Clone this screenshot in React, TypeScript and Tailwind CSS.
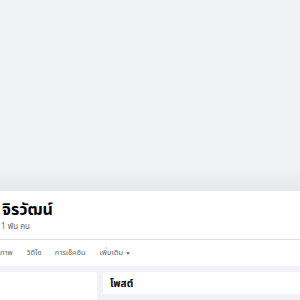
import React from "react";

export default function App() {
  const font = { fontFamily: '"Noto Sans", "Noto Sans Thai", "Liberation Sans", sans-serif' };
  return (
    <div className="w-[300px] h-[300px] overflow-hidden bg-[#f0f2f5]" style={font}>
      <div className="h-[191px] bg-[linear-gradient(to_bottom,#f0f2f5_0%,#f0f2f5_88%,#e6e7ea_100%)]" />
      <div className="h-[75px] bg-white flex flex-col">
        <div className="h-[49px] flex flex-col pl-[2px] pt-[8px] border-b border-[#dddfe2]">
          <div className="text-[16px] leading-[21px] font-bold text-[#050505]">จิรวัฒน์</div>
          <div className="text-[8px] leading-[12px] text-[#65676b] -ml-[1px]">1 พัน คน</div>
        </div>
        <div className="flex items-center h-[26px] text-[7.5px] text-[#65676b] font-normal">
          <span>ภาพ</span>
          <span className="ml-[14px]">วิดีโอ</span>
          <span className="ml-[13px]">การเช็คอิน</span>
          <span className="ml-[14px] flex items-center gap-[3px]">
            เพิ่มเติม
            <svg width="4" height="3" viewBox="0 0 10 6"><path d="M0 0 L10 0 L5 6 Z" fill="#65676b" /></svg>
          </span>
        </div>
      </div>
      <div className="flex gap-[6px] mt-[6px]">
        <div className="w-[97px] h-[40px] bg-white" />
        <div className="flex-1 h-[22px] bg-white rounded-tl-[3px] flex items-center pl-[7px]">
          <span className="text-[10px] font-bold text-[#050505]">โพสต์</span>
        </div>
      </div>
    </div>
  );
}
